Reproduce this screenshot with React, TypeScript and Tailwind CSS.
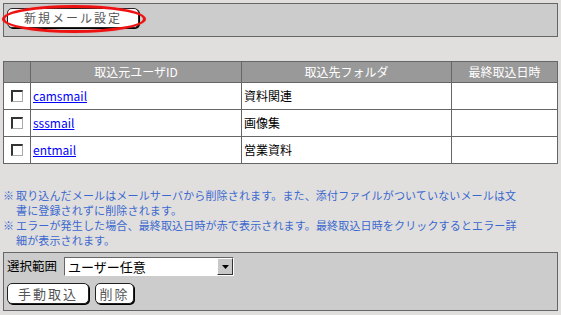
import React from "react";

const rows = [
  { id: "camsmail", folder: "資料関連" },
  { id: "sssmail", folder: "画像集" },
  { id: "entmail", folder: "営業資料" },
];

const font = { fontFamily: '"Noto Sans CJK JP", "Liberation Sans", sans-serif' };

const OldButton = ({ label, className = "" }: any) => (
  <div
    className={`flex items-center justify-center bg-white rounded-[5px] border border-[#222] shadow-[1px_1px_0_#000] text-[#555] text-[12px] tracking-[2px] ${className}`}
  >
    {label}
  </div>
);

const CheckBox = () => (
  <span className="block w-[12px] h-[12px] bg-white border-t-[2px] border-l-[2px] border-t-[#333] border-l-[#333] border-b border-r border-b-[#aaa] border-r-[#aaa]" />
);

const MailImportSettings: React.FC = () => {
  return (
    <div className="w-[561px] h-[315px] bg-[#e1dfdd] pt-[3px] px-[3px] text-black" style={font}>
      {/* top panel */}
      <div className="h-[34px] border border-[#666] bg-[#cccccc] pl-[3px] pt-[4px]">
        <div className="relative w-[132px]">
          <OldButton label="新規メール設定" className="h-[20px]" />
          <div className="absolute left-[-5px] top-[-3px] w-[144px] h-[28px] rounded-[50%] border-[3px] border-[#ee1111] shadow-[0_0_1px_#f66]" />
        </div>
      </div>

      {/* table */}
      <table className="w-full mt-[24px] border-collapse border border-[#666] text-[12px]">
        <thead>
          <tr className="h-[21px] bg-[#999999] text-white">
            <th className="w-[27px] border border-[#666] font-normal" />
            <th className="w-[211px] border border-[#666] font-normal">取込元ユーザID</th>
            <th className="w-[210px] border border-[#666] font-normal">取込先フォルダ</th>
            <th className="border border-[#666] font-normal">最終取込日時</th>
          </tr>
        </thead>
        <tbody className="bg-white">
          {rows.map((r) => (
            <tr key={r.id} className="h-[27px]">
              <td className="border border-[#666]">
                <div className="flex justify-center">
                  <CheckBox />
                </div>
              </td>
              <td className="border border-[#666] px-[2px]">
                <a className="text-[#0000ff] underline">{r.id}</a>
              </td>
              <td className="border border-[#666] px-[2px]">{r.folder}</td>
              <td className="border border-[#666]" />
            </tr>
          ))}
        </tbody>
      </table>

      {/* notes */}
      <div className="mt-[24px] text-[11px] leading-[15px] text-[#3a68cf] tracking-[0.15px]">
        <div className="flex">
          <span className="w-[13px] shrink-0">※</span>
          <span>
            取り込んだメールはメールサーバから削除されます。また、添付ファイルがついていないメールは文
            <br />
            書に登録されずに削除されます。
          </span>
        </div>
        <div className="flex">
          <span className="w-[13px] shrink-0">※</span>
          <span>
            エラーが発生した場合、最終取込日時が赤で表示されます。最終取込日時をクリックするとエラー詳
            <br />
            細が表示されます。
          </span>
        </div>
      </div>

      {/* bottom panel */}
      <div className="mt-[4px] h-[59px] border border-[#666] bg-[#cccccc] px-[3px] pt-[4px] text-[12px]">
        <div className="flex items-center gap-[7px]">
          <span className="text-[12.5px]">選択範囲</span>
          <div className="flex w-[170px] h-[19px] bg-white border border-t-[#666] border-l-[#666] border-b-white border-r-white">
            <span className="flex-1 pl-[3px] leading-[17px] text-[13px]">ユーザー任意</span>
            <div className="w-[16px] h-[17px] bg-[#c8c8c8] border border-t-white border-l-white border-b-[#333] border-r-[#333] flex items-center justify-center">
              <svg width="7" height="4" viewBox="0 0 7 4">
                <path d="M0 0h7L3.5 4z" fill="#000" />
              </svg>
            </div>
          </div>
        </div>
        <div className="flex gap-[6px] mt-[7px]">
          <OldButton label="手動取込" className="w-[82px] h-[21px] text-[13px]" />
          <OldButton label="削除" className="w-[39px] h-[21px] tracking-[1px] text-[13px]" />
        </div>
      </div>
    </div>
  );
};

export default MailImportSettings;
